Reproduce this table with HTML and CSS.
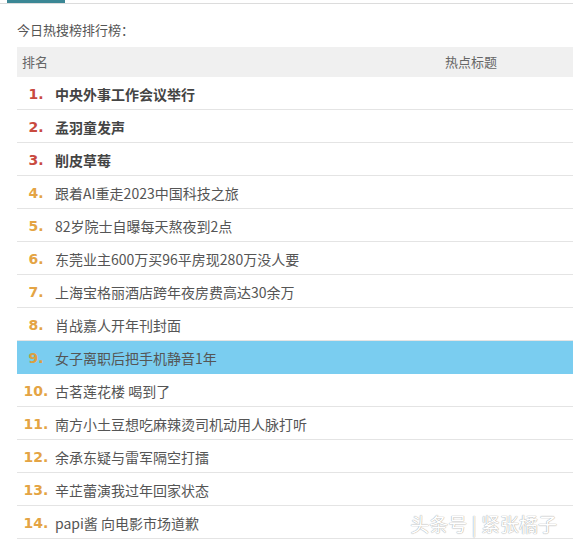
FILE: index.html
```html
<!DOCTYPE html>
<html lang="zh-CN">
    <head>
        <meta charset="UTF-8">
        <title>今日热搜榜</title>
        <link rel="stylesheet" href="styles.css">
    </head>
    <body>
        <div class="tabs"><div class="tab-active"></div></div>
        <p class="title">今日热搜榜排行榜：</p>
        <div class="rank">
            <div class="rank-head">
                <span>排名</span>
                <span class="head-right">热点标题</span>
            </div>
            <div class="row top"><span class="num">1.</span><span class="txt">中央外事工作会议举行</span></div>
            <div class="row top"><span class="num">2.</span><span class="txt">孟羽童发声</span></div>
            <div class="row top"><span class="num">3.</span><span class="txt">削皮草莓</span></div>
            <div class="row"><span class="num">4.</span><span class="txt">跟着AI重走2023中国科技之旅</span></div>
            <div class="row"><span class="num">5.</span><span class="txt">82岁院士自曝每天熬夜到2点</span></div>
            <div class="row"><span class="num">6.</span><span class="txt">东莞业主600万买96平房现280万没人要</span></div>
            <div class="row"><span class="num">7.</span><span class="txt">上海宝格丽酒店跨年夜房费高达30余万</span></div>
            <div class="row"><span class="num">8.</span><span class="txt">肖战嘉人开年刊封面</span></div>
            <div class="row active"><span class="num">9.</span><span class="txt">女子离职后把手机静音1年</span></div>
            <div class="row"><span class="num">10.</span><span class="txt">古茗莲花楼 喝到了</span></div>
            <div class="row"><span class="num">11.</span><span class="txt">南方小土豆想吃麻辣烫司机动用人脉打听</span></div>
            <div class="row"><span class="num">12.</span><span class="txt">余承东疑与雷军隔空打擂</span></div>
            <div class="row"><span class="num">13.</span><span class="txt">辛芷蕾演我过年回家状态</span></div>
            <div class="row"><span class="num">14.</span><span class="txt">papi酱 向电影市场道歉</span></div>
        </div>
        <div class="watermark">头条号 | 紧张橘子</div>
    </body>
</html>
```

FILE: styles.css
```css
body {
    margin: 0;
    background: #fff;
    font-family: "Noto Sans CJK SC", "Liberation Sans", sans-serif;
    color: #555;
    overflow: hidden;
}
.tabs {
    height: 3px;
    border-bottom: 1px solid #dcdcdc;
}
.tab-active {
    margin-left: 7px;
    width: 58px;
    height: 3px;
    background: #3b8795;
}
.title {
    margin: 16px 0 7px 17px;
    font-size: 13px;
    line-height: 20px;
    color: #555;
}
.rank {
    margin-left: 17px;
}
.rank-head {
    display: flex;
    justify-content: space-between;
    height: 30px;
    line-height: 30px;
    padding: 0 76px 0 5px;
    background: #f0f0f0;
    font-size: 13px;
    color: #666;
}
.row {
    display: flex;
    height: 32px;
    line-height: 34px;
    border-bottom: 1px solid #e4e4e4;
    font-size: 14px;
}
.row .num {
    width: 38px;
    text-align: center;
    font-family: "DejaVu Sans", sans-serif;
    font-weight: bold;
    font-size: 14px;
    color: #e4a444;
}
.row .txt {
    color: #555;
}
.row.top .num {
    color: #c94a3f;
}
.row.top .txt {
    font-weight: bold;
    color: #444;
}
.row.active {
    background: #7acdf0;
    border-bottom-color: #7acdf0;
}
.row.active .num {
    color: #d9a040;
}
.watermark {
    position: absolute;
    right: 16px;
    bottom: 14px;
    font-size: 19px;
    color: #fff;
    text-shadow: 0 0 1px #999, 0 0 1px #bbb;
    white-space: pre;
}
```
